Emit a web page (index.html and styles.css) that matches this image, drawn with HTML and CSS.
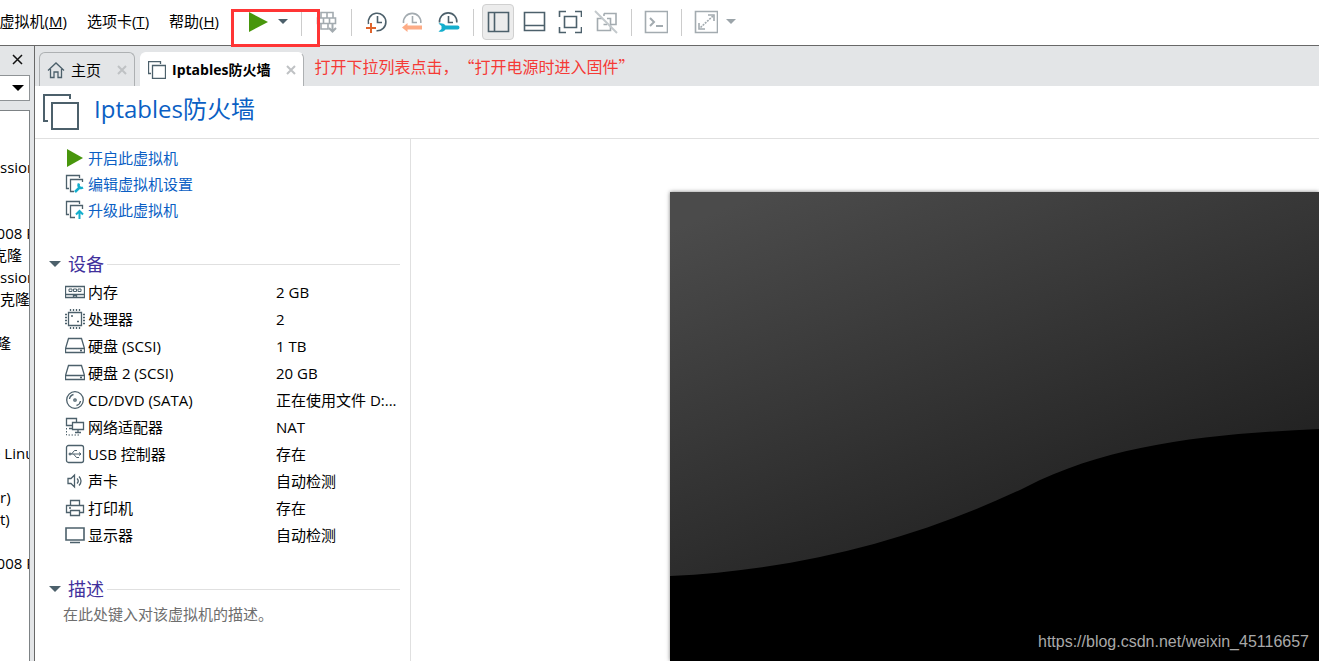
FILE: index.html
```html
<!DOCTYPE html>
<html lang="zh-CN">
<head>
<meta charset="utf-8">
<title>Iptables防火墙</title>
<link rel="stylesheet" href="styles.css">
</head>
<body>
<header class="topbar">
  <nav class="menu">
    <button class="menu-item" type="button">虚拟机(<u>M</u>)</button>
    <button class="menu-item" type="button">选项卡(<u>T</u>)</button>
    <button class="menu-item" type="button">帮助(<u>H</u>)</button>
  </nav>
  <span class="sep"></span>
  <div class="power">
    <button class="tool" type="button" aria-label="开启"><svg width="24" height="24"><path d="M3 2v20l19-10z" fill="#48960c"/></svg></button>
    <button class="caret" type="button" aria-label="电源选项"><svg width="12" height="8"><path d="M1 1h10L6 6z" fill="#4c606b"/></svg></button>
    <span class="highlight"></span>
  </div>
  <span class="sep"></span>
  <button class="tool" type="button" aria-label="发送按键"><svg class="faded" width="24" height="24"><path d="M7 2.500h12v5.500H7zM13 2.500v5.500M3.500 8h12v5.500h-12zM9.500 8v5.500M7 13.500V19h7v-5.500M15.500 8h6v5.500h-6"/><path d="M18.500 14v7M15 18l3.500 3.500L22 18" stroke-width="2"/></svg></button>
  <span class="sep"></span>
  <button class="tool" type="button" aria-label="拍摄快照"><svg class="line" width="24" height="24"><path d="M4.500 14A8.800 8.800 0 1 1 12.500 20.800M13.500 6v6.500H18"/><path d="M7 13v10M2 18h10" stroke="#e0642c" stroke-width="2"/></svg></button>
  <button class="tool" type="button" aria-label="恢复快照"><svg class="faded" width="24" height="24"><path d="M3.500 13a8.700 8.700 0 1 1 17.300 0M12.500 6v6.500H17"/><path d="M2 17.500l5.500-4.500v2.500H22v4H7.500V22z" fill="#fdac86" stroke="none"/></svg></button>
  <button class="tool" type="button" aria-label="管理快照"><svg class="line" width="24" height="24"><path d="M3.500 12.500a8.700 8.700 0 1 1 17.300 0M12.500 6v6.500H17"/><path d="M2.500 13.500c3-.8 5.500 0 7 2h12a2 2 0 0 1 0 4h-12c-1.500 2-4 2.800-7 2l3-2.500v-3z" fill="#14aecd" stroke="none"/></svg></button>
  <span class="sep"></span>
  <button class="tool active" type="button" aria-label="显示库"><svg class="line" width="24" height="24"><path d="M2.500 2.500h20v19h-20zM8.500 2.500v19"/></svg></button>
  <button class="tool" type="button" aria-label="缩略图栏"><svg class="line" width="24" height="24"><path d="M2.500 2.500h20v18h-20zM2.500 15.500h20"/></svg></button>
  <button class="tool" type="button" aria-label="全屏"><svg class="line" width="24" height="24"><path d="M1.500 7V1.500H8M17 1.500h6.500V7M23.500 17v5.500H17M8 22.500H1.500V17M6.500 6.500h12v11h-12z"/></svg></button>
  <button class="tool" type="button" aria-label="Unity"><svg class="faded" width="24" height="24"><path d="M10 3.500h12v11h-5M10 3.500V6M8 8.500H3.500v12h13v-12H13M9.500 14.500H13"/><path d="M1 1l22 22" stroke="#c3c9cc" stroke-width="2"/></svg></button>
  <span class="sep"></span>
  <button class="tool" type="button" aria-label="控制台"><svg class="faded" width="24" height="24"><path d="M1.500 1.500h22v21h-22z"/><path d="M6 8l4 4-4 4M12 16h7" stroke-width="2"/></svg></button>
  <span class="sep"></span>
  <button class="tool" type="button" aria-label="自由拉伸"><svg class="faded" width="24" height="24"><path d="M1.500 1.500h22v21h-22zM14 5h6v6M5 13v6h6"/><path d="M19 6L6 18" stroke-dasharray="2 1"/></svg></button>
  <button class="caret" type="button" aria-label="拉伸选项"><svg width="12" height="8"><path d="M1 1h10L6 6z" fill="#9ba4a9"/></svg></button>
</header>
<div class="workspace">
  <aside class="library">
    <button class="library-close" type="button" aria-label="关闭库"><svg width="11" height="11"><path d="M1 1l9 9M10 1l-9 9" stroke="#111" stroke-width="1.500"/></svg></button>
    <button class="library-filter" type="button" aria-label="筛选"><svg width="12" height="7"><path d="M0 0h12L6 6z" fill="#000"/></svg></button>
    <ul class="tree">
      <li></li><li></li><li>ssion</li><li></li><li></li>
      <li class="far">2008 R</li><li class="cut">克隆</li><li>ssion</li><li>克隆</li><li></li>
      <li class="mid">隆</li><li></li><li></li><li></li><li></li>
      <li class="cut">e Linux</li><li></li><li>r)</li><li>t)</li><li></li>
      <li class="far">2008 R</li>
    </ul>
  </aside>
  <main class="content">
    <div class="tabs">
      <div class="tab">
        <svg class="line thin" width="18" height="18"><path d="M1 9.500L9 2l8 7.500M3.500 8v8.500H7V11h4v5.500h3.500V8"/></svg>
        <span>主页</span>
        <button class="tab-close" type="button" aria-label="关闭主页"><svg width="10" height="10"><path d="M1 1l8 8M9 1L1 9"/></svg></button>
      </div>
      <div class="tab current">
        <svg class="line thin" width="18" height="18"><path d="M3 12.500H.5V.5h12V3M4.500 4.500h13v13h-13z"/></svg>
        <span>Iptables防火墙</span>
        <button class="tab-close" type="button" aria-label="关闭 Iptables防火墙"><svg width="10" height="10"><path d="M1 1l8 8M9 1L1 9"/></svg></button>
      </div>
      <p class="note">打开下拉列表点击，“打开电源时进入固件”</p>
    </div>
    <div class="title-row">
      <svg class="line bold" width="36" height="36"><path d="M5 27H1V1h26v4M9 9h26v26H9z"/></svg>
      <h1>Iptables防火墙</h1>
    </div>
    <div class="panes">
      <section class="details">
        <div class="actions">
          <a href="#"><svg width="20" height="20"><path d="M2 1v18l16-9z" fill="#48960c"/></svg>开启此虚拟机</a>
          <a href="#"><svg class="line thin" width="20" height="20"><path d="M4 14.500H1.500v-13h13V4M9 17.500H5.500v-12h12V8"/><path d="M10 18l5-5M14 9.500c-1.500 3 1 5.500 4 4" stroke="#14aecd" stroke-width="2.500"/></svg>编辑虚拟机设置</a>
          <a href="#"><svg class="line thin" width="20" height="20"><path d="M4 14.500H1.500v-13h13V4M10 17.500H5.500v-12h12V9"/><path d="M14.500 19v-7M11 14.500l3.500-3.500 3.500 3.500" stroke="#14aecd" stroke-width="2"/></svg>升级此虚拟机</a>
        </div>
        <h2><svg width="12" height="8"><path d="M0 1h12L6 7z" fill="#4c606b"/></svg><span>设备</span></h2>
        <table class="devices">
          <tr><th scope="row"><svg class="line thin" width="20" height="20"><path d="M.5 4.500h19v11H.5zM.5 12.500h19M8.500 15.500v-2h3v2"/><path d="M4 7h3v2.500H4zM8.500 7h3v2.500h-3zM13 7h3v2.500h-3z" stroke-width="1"/></svg>内存</th><td>2 GB</td></tr>
          <tr><th scope="row"><svg class="line thin" width="20" height="20"><path d="M3.500 3.500h13v13h-13z"/><path d="M5.500 0v2M8.500 0v2M11.500 0v2M14.500 0v2M5.500 18v2M8.500 18v2M11.500 18v2M14.500 18v2M0 5.500h2M0 8.500h2M0 11.500h2M0 14.500h2M18 5.500h2M18 8.500h2M18 11.500h2M18 14.500h2M6 7h2M12 12.500h2"/></svg>处理器</th><td>2</td></tr>
          <tr><th scope="row"><svg class="line thin" width="20" height="20"><path d="M3.500 2.500h13l3 10v4H.5v-4zM.5 12.500h19M15 14.500h2"/></svg>硬盘 (SCSI)</th><td>1 TB</td></tr>
          <tr><th scope="row"><svg class="line thin" width="20" height="20"><path d="M3.500 2.500h13l3 10v4H.5v-4zM.5 12.500h19M15 14.500h2"/></svg>硬盘 2 (SCSI)</th><td>20 GB</td></tr>
          <tr><th scope="row"><svg class="line thin" width="20" height="20"><circle cx="10" cy="10" r="8.300"/><circle cx="10" cy="10" r="1.200"/><path d="M4.500 9a5.500 5.500 0 0 1 4-4.500M15.500 11a5.500 5.500 0 0 1-4 4.500"/></svg>CD/DVD (SATA)</th><td>正在使用文件 D:...</td></tr>
          <tr><th scope="row"><svg class="line thin" width="20" height="20"><path d="M7 8.500H1.500v-7h10V5M4 11.500h4M7.500 5.500h11v7h-11zM13 13v3M10 15.500h6"/><path d="M1.500 11v7H14" stroke-width="1" stroke-dasharray="1.500 1.500"/></svg>网络适配器</th><td>NAT</td></tr>
          <tr><th scope="row"><svg class="line thin" width="20" height="20"><rect x="1.500" y="1.500" width="17" height="17" rx="2"/><g stroke-width="1"><path d="M4 10h12M6.500 10l3-3.500H12M8.500 10l3 3.500H14M14 8.500l2 1.500-2 1.500"/><circle cx="5" cy="10" r="1"/></g></svg>USB 控制器</th><td>存在</td></tr>
          <tr><th scope="row"><svg class="line thin" width="20" height="20"><path d="M3 7.500h3L9.500 4v12L6 12.500H3zM12 7.500c1.500 1.500 1.500 3.500 0 5M14 5.500c2.700 2.700 2.700 6.300 0 9"/></svg>声卡</th><td>自动检测</td></tr>
          <tr><th scope="row"><svg class="line thin" width="20" height="20"><path d="M5.500 7V2.500h9V7M5 14.500H1.500v-7h17v7H15M5.500 12.500h9v5h-9zM4 10h2"/></svg>打印机</th><td>存在</td></tr>
          <tr><th scope="row"><svg class="line" width="20" height="20"><path d="M1 3h18v12H1zM5 17.500h10"/></svg>显示器</th><td>自动检测</td></tr>
        </table>
        <h2><svg width="12" height="8"><path d="M0 1h12L6 7z" fill="#4c606b"/></svg><span>描述</span></h2>
        <textarea class="description" rows="1" aria-label="描述" placeholder="在此处键入对该虚拟机的描述。"></textarea>
      </section>
      <section class="preview">
        <div class="screen">
          <svg class="wave" viewBox="0 0 649 469" preserveAspectRatio="xMinYMin slice">
            <defs><linearGradient id="shade" gradientUnits="userSpaceOnUse" x1="20" y1="30" x2="188" y2="450"><stop offset="0" stop-color="#4b4b4b"/><stop offset="1" stop-color="#202020"/></linearGradient></defs>
            <path d="M0 0H649V237C540 242 440 252 356 295C250 346 130 378 0 384z" fill="url(#shade)"/>
          </svg>
          <span class="watermark">https://blog.csdn.net/weixin_45116657</span>
        </div>
      </section>
    </div>
  </main>
</div>
</body>
</html>
```
FILE: styles.css
```css
* {
  box-sizing: border-box;
}

body {
  margin: 0;
  height: 100vh;
  display: flex;
  flex-direction: column;
  overflow: hidden;
  background: #fff;
  color: #000;
  font: 15px/22px "Open Sans", "Noto Sans CJK SC", sans-serif;
}

button {
  padding: 0;
  border: 0;
  background: none;
  color: inherit;
  font: inherit;
}

svg {
  display: block;
  flex: none;
}

.line,
.faded {
  fill: none;
  stroke: #4c606b;
  stroke-width: 1.6;
}

.faded {
  stroke: #a3abb0;
}

.thin {
  stroke-width: 1.3;
}

.bold {
  stroke-width: 2;
}

.topbar {
  flex: none;
  display: flex;
  align-items: center;
  height: 46px;
  padding-bottom: 1px;
  border-bottom: 1px solid #686868;
}

.menu {
  display: flex;
  justify-content: flex-end;
  gap: 20px;
  width: 226px;
  padding: 0 7px 3px 0;
}

.menu-item {
  flex: none;
  white-space: nowrap;
}

.sep {
  width: 1px;
  height: 27px;
  margin: 0 6px 0 7px;
  background: #ccc;
}

.power {
  position: relative;
  display: flex;
  padding-right: 4px;
}

.tool {
  display: flex;
  align-items: center;
  justify-content: center;
  width: 36px;
  height: 36px;
}

.active {
  width: 32px;
  margin: 0 2px;
  border: 1px solid #d0d0d0;
  border-radius: 4px;
  background: #ececec;
}

.caret {
  display: flex;
  align-items: center;
  justify-content: center;
  width: 14px;
}

.highlight {
  position: absolute;
  left: -9px;
  top: 5px;
  width: 89px;
  height: 38px;
  border: 3px solid #ff3535;
  z-index: 1;
}

.workspace {
  flex: 1;
  display: flex;
  min-height: 0;
  background: #e3e5e7;
}

.library {
  flex: none;
  display: flex;
  flex-direction: column;
  width: 34px;
  padding-right: 4px;
}

.library-close {
  display: flex;
  align-items: center;
  justify-content: center;
  height: 29px;
  padding: 0 0 2px 5px;
}

.library-filter {
  display: flex;
  align-items: center;
  justify-content: flex-end;
  height: 26px;
  padding-right: 5px;
  border: 1px solid #8f9396;
  border-left: 0;
  background: #fff;
}

.tree {
  flex: 1;
  min-height: 0;
  margin: 9px 0 0;
  padding: 1px 0 0;
  overflow: hidden;
  list-style: none;
  border: 1px solid #7d8285;
  border-left: 0;
  border-bottom: 0;
  background: #fff;
}

.tree li {
  height: 22px;
  white-space: nowrap;
  overflow: hidden;
}

.tree .cut {
  text-indent: -8px;
}

.tree .far {
  text-indent: -12px;
}

.tree .mid {
  text-indent: -4px;
}

.content {
  flex: 1;
  display: flex;
  flex-direction: column;
  min-width: 0;
  border-left: 1px solid #686868;
  background: #fff;
}

.tabs {
  flex: none;
  display: flex;
  align-items: flex-end;
  gap: 5px;
  height: 40px;
  padding-left: 4px;
  background: #e3e5e7;
}

.tab {
  display: flex;
  align-items: center;
  gap: 6px;
  height: 34px;
  padding: 0 7px;
  border: 1px solid #adb0b2;
  border-bottom: 0;
  border-radius: 6px 6px 0 0;
}

.current {
  border-color: #fff #adb0b2 #fff #fff;
  background: #fff;
  font-size: 14px;
  font-weight: 700;
}

.tab-close {
  margin-left: 10px;
  stroke: #bfc2c4;
  stroke-width: 2;
}

.note {
  margin: 0 0 0 5px;
  align-self: center;
  color: #f53a36;
  font: 16px/22px "Noto Sans CJK SC", sans-serif;
  text-spacing-trim: space-all;
  white-space: nowrap;
}

.title-row {
  flex: none;
  display: flex;
  align-items: center;
  gap: 15px;
  height: 53px;
  padding-left: 8px;
  border-bottom: 1px solid #e0e0e0;
}

h1 {
  margin: 0;
  padding-bottom: 6px;
  color: #0b5fc4;
  font-size: 24px;
  line-height: 32px;
  font-weight: 400;
}

.panes {
  flex: 1;
  display: flex;
  min-height: 0;
}

.details {
  flex: none;
  width: 376px;
  padding: 6px 10px 0 14px;
  border-right: 1px solid #e0e0e0;
}

.actions {
  padding-left: 16px;
}

.actions a {
  display: flex;
  align-items: center;
  gap: 3px;
  height: 26px;
  color: #0b5fc4;
  text-decoration: none;
}

h2 {
  display: flex;
  align-items: center;
  gap: 7px;
  height: 28px;
  margin: 27px 0 0;
  color: #41309c;
  font-size: 18px;
  font-weight: 400;
}

h2::after {
  content: "";
  flex: 1;
  height: 1px;
  margin-left: -4px;
  background: #e0e0e0;
}

.devices {
  width: 100%;
  border-collapse: collapse;
  table-layout: fixed;
}

.devices th {
  display: flex;
  align-items: center;
  gap: 3px;
  height: 27px;
  padding: 0 0 0 16px;
  font-weight: 400;
}

.devices td {
  width: 124px;
  padding: 0;
  white-space: nowrap;
}

.description {
  display: block;
  width: 100%;
  height: 24px;
  padding: 0 14px;
  border: 0;
  resize: none;
  overflow: hidden;
  background: none;
  font: inherit;
}

.description::placeholder {
  color: #6e6e6e;
}

.preview {
  flex: 1;
  display: flex;
  min-width: 0;
  padding: 53px 0 0 259px;
}

.screen {
  position: relative;
  flex: 1;
  background: #000;
  box-shadow: 0 0 4px rgba(0, 0, 0, 0.5);
}

.wave {
  width: 100%;
  height: 100%;
}

.watermark {
  position: absolute;
  right: 10px;
  bottom: 8px;
  color: #a9a9a9;
  font: 16px/22px "Liberation Sans", Arial, sans-serif;
}
```
